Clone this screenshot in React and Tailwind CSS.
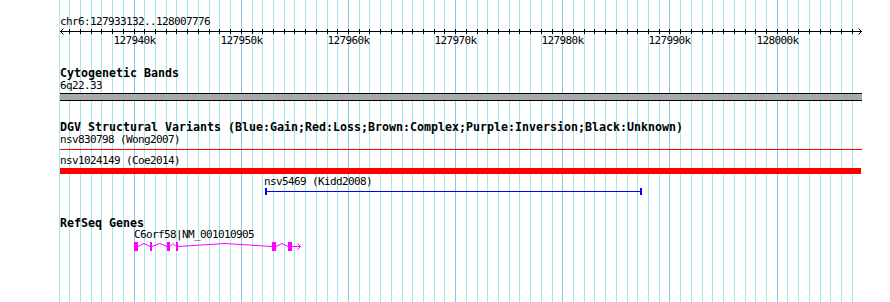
import React from 'react';

// Region shown in the panel
const START = 127933132;
const END = 128007776;
const LEFT = 60;
const WIDTH = 800;

const toX = (bp) => LEFT + ((bp - START) * WIDTH) / (END - START);

// one grid line per kb, darker every 10 kb
const gridLines = [];
for (let k = 127933; k <= 128007; k++) {
  gridLines.push({ x: Math.round(toX(k * 1000)), major: k % 10 === 0, k });
}

const mono = "font-['DejaVu_Sans_Mono','Liberation_Mono',monospace]";
const small = `${mono} text-[11px] tracking-[-0.62px] text-black whitespace-nowrap`;
const bold = `${mono} text-[11.63px] font-bold text-black whitespace-nowrap`;

const Grid = () => (
  <svg
    className="absolute inset-0 pointer-events-none"
    width="890"
    height="302"
    shapeRendering="crispEdges"
  >
    {gridLines.map((l) => (
      <line
        key={l.k}
        x1={l.x + 0.5}
        x2={l.x + 0.5}
        y1="0"
        y2="302"
        stroke={l.major ? '#86c6e8' : '#a4e8ee'}
        strokeWidth="1"
      />
    ))}
  </svg>
);

const Ruler = () => {
  const ticks = gridLines.filter((l) => l.x > 61 && l.x < 860);
  return (
    <svg className="block" width="804" height="18" viewBox="60 28 804 18">
      <g shapeRendering="crispEdges" stroke="#000" strokeWidth="1">
        <line x1="60" x2="862" y1="31.5" y2="31.5" />
        {ticks.map((t) => (
          <line key={t.k} x1={t.x + 0.5} x2={t.x + 0.5} y1="29" y2="34" />
        ))}
      </g>
      <polyline points="63.5,28.5 60.5,31.5 63.5,34.5" fill="none" stroke="#000" strokeWidth="1" />
      <polyline points="858.5,28.5 861.5,31.5 858.5,34.5" fill="none" stroke="#000" strokeWidth="1" />
      {ticks
        .filter((t) => t.major)
        .map((t) => (
          <text
            key={t.k}
            x={t.x + 0.5}
            y="43.6"
            textAnchor="middle"
            fontSize="11"
            letterSpacing="-0.62"
            fontFamily="DejaVu Sans Mono, Liberation Mono, monospace"
            fill="#000"
          >
            {t.k}k
          </text>
        ))}
    </svg>
  );
};

// exon columns [from, to) in page pixels
const exons = [
  [134, 138],
  [150, 152],
  [167, 170],
  [176, 178],
  [272, 276],
  [288, 292],
];

const GeneModel = () => {
  const hats = [];
  for (let i = 0; i < exons.length - 1; i++) {
    const a = exons[i][1];
    const b = exons[i + 1][0];
    const mid = (a + b) / 2;
    hats.push(`${a},246.5 ${mid},243.5 ${b},246.5`);
  }
  return (
    <svg className="block" width="802" height="14" viewBox="60 241 802 14">
      {hats.map((p, i) => (
        <polyline key={i} points={p} fill="none" stroke="#ff00ff" strokeWidth="1" />
      ))}
      <line x1="292" x2="300.5" y1="246.5" y2="246.5" stroke="#ff00ff" strokeWidth="1" />
      <polyline points="297.5,243.5 300.5,246.5 297.5,249.5" fill="none" stroke="#ff00ff" strokeWidth="1" />
      {exons.map(([a, b]) => (
        <rect key={a} x={a} y="242" width={b - a} height="9" fill="#ff00ff" shapeRendering="crispEdges" />
      ))}
    </svg>
  );
};

const App = () => {
  return (
    <div className="relative w-[890px] h-[302px] bg-white overflow-hidden">
      <Grid />

      <div className="relative pl-[60px] pt-[15px]">
        {/* Ruler */}
        <div className={`${small} h-[13px] leading-[13px]`}>chr6:127933132..128007776</div>
        <Ruler />

        {/* Cytogenetic bands */}
        <div className={`${bold} mt-[21px] h-[13px] leading-[13px]`}>Cytogenetic Bands</div>
        <div className={`${small} h-[12px] leading-[12px]`}>6q22.33</div>
        <div className="mt-px h-[8px] w-[802px] border-y border-black bg-[#aaaaaa]" />

        {/* DGV */}
        <div className={`${bold} mt-[20px] h-[13px] leading-[13px]`}>
          DGV Structural Variants (Blue:Gain;Red:Loss;Brown:Complex;Purple:Inversion;Black:Unknown)
        </div>
        <div className={`${small} h-[12px] leading-[12px]`}>nsv830798 (Wong2007)</div>
        <div className="mt-[3px] h-px w-[802px] bg-[#ff0000]" />
        <div className={`${small} mt-[5px] h-[12px] leading-[12px]`}>nsv1024149 (Coe2014)</div>
        <div className="mt-px h-[6px] w-[801px] bg-[#ff0000]" />
        <div className={`${small} mt-[2px] ml-[204px] h-[12px] leading-[12px]`}>nsv5469 (Kidd2008)</div>
        <svg className="block" width="802" height="7" viewBox="60 188 802 7" shapeRendering="crispEdges">
          <rect x="265" y="191" width="377" height="1" fill="#0000ff" />
          <rect x="265" y="188" width="2" height="7" fill="#0000ff" />
          <rect x="640" y="188" width="2" height="7" fill="#0000ff" />
        </svg>

        {/* RefSeq */}
        <div className={`${bold} mt-[22px] h-[12px] leading-[12px]`}>RefSeq Genes</div>
        <div className={`${small} ml-[74px] h-[12px] leading-[12px]`}>C6orf58|NM_001010905</div>
        <GeneModel />
      </div>
    </div>
  );
};

export default App;
